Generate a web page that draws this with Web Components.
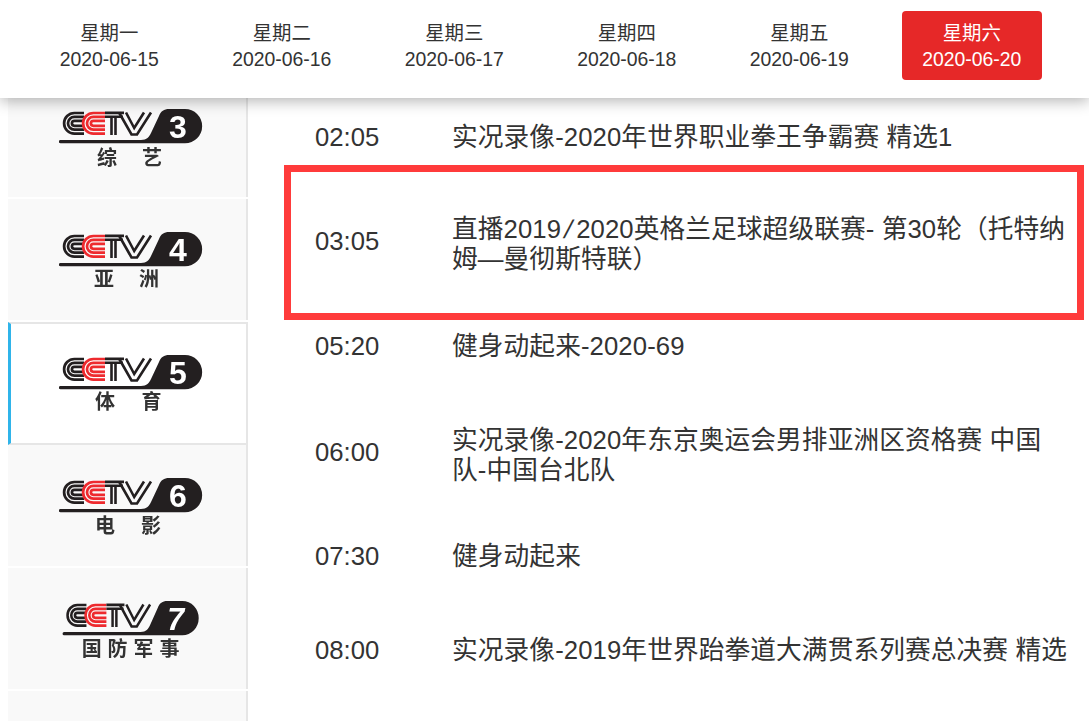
<!DOCTYPE html>
<html lang="zh">
<head>
<meta charset="utf-8">
<title>节目单</title>
<style>
    html, body { margin: 0; height: 100%; background: #fff; }
    body {
        font-family: "Liberation Sans", "Noto Sans CJK SC", sans-serif;
        color: #333;
        overflow: hidden;
    }
    .slash { display: inline-block; width: 15px; text-align: center; transform: skewX(-14deg); }
</style>
</head>
<body>
<tv-guide>
    <day-tabs slot="header">
        <day-tab week="星期一" date="2020-06-15"></day-tab>
        <day-tab week="星期二" date="2020-06-16"></day-tab>
        <day-tab week="星期三" date="2020-06-17"></day-tab>
        <day-tab week="星期四" date="2020-06-18"></day-tab>
        <day-tab week="星期五" date="2020-06-19"></day-tab>
        <day-tab week="星期六" date="2020-06-20" active></day-tab>
    </day-tabs>
    <channel-list slot="side">
        <channel-item num="3" name="综艺" name-x="48 93" name-y="57"></channel-item>
        <channel-item num="4" name="亚洲" name-x="45 90" name-y="55"></channel-item>
        <channel-item num="5" name="体育" name-x="46 92.5" name-y="55" active></channel-item>
        <channel-item num="6" name="电影" name-x="46 92" name-y="56"></channel-item>
        <channel-item num="7" name="国防军事" name-x="32.7 58.5 84.5 110.5" name-y="56" wide></channel-item>
        <channel-item></channel-item>
    </channel-list>
    <program-list slot="main">
        <program-row time="02:05" style="--h: 67px; --top: 11px">实况录像-2020年世界职业拳王争霸赛 精选1</program-row>
        <program-row time="03:05" live style="--h: 155px; --title-top: 3px; --time-bottom: 3px">直播2019<span class="slash">/</span>2020英格兰足球超级联赛- 第30轮（托特纳<span>姆—曼彻斯特联）</span></program-row>
        <program-row time="05:20" style="--h: 52px">健身动起来-2020-69</program-row>
        <program-row time="06:00" style="--h: 160px; --title-top: 6px">实况录像-2020年东京奥运会男排亚洲区资格赛 中国队-中国台北队</program-row>
        <program-row time="07:30" style="--h: 48px">健身动起来</program-row>
        <program-row time="08:00" style="--h: 140px">实况录像-2019年世界跆拳道大满贯系列赛总决赛 精选</program-row>
    </program-list>
</tv-guide>

<script>
class TvGuide extends HTMLElement {
    constructor() {
        super();
        this.attachShadow({ mode: 'open' });
        this.shadowRoot.innerHTML = `
            <style>
                :host { display: flex; flex-direction: column; height: 721px; }
                .top {
                    position: relative;
                    z-index: 2;
                    height: 98px;
                    flex: none;
                    background: #fff;
                    box-shadow: 0 3px 14px rgba(0, 0, 0, 0.3);
                }
                .body { flex: 1; display: flex; min-height: 0; overflow: hidden; padding-left: 8px; }
                .side { width: 240px; flex: none; }
                .main { flex: 1; min-width: 0; }
            </style>
            <div class="top"><slot name="header"></slot></div>
            <div class="body">
                <div class="side"><slot name="side"></slot></div>
                <div class="main"><slot name="main"></slot></div>
            </div>
        `;
    }
}

class DayTabs extends HTMLElement {
    constructor() {
        super();
        this.attachShadow({ mode: 'open' });
        this.shadowRoot.innerHTML = `
            <style>
                :host {
                    display: grid;
                    grid-template-columns: repeat(6, 1fr);
                    padding: 11px 31px 0 23px;
                }
            </style>
            <slot></slot>
        `;
    }
}

class DayTab extends HTMLElement {
    constructor() {
        super();
        this.attachShadow({ mode: 'open' });
        this.shadowRoot.innerHTML = `
            <style>
                :host { display: block; width: 140px; justify-self: center; }
                .tab {
                    height: 69px;
                    border-radius: 4px;
                    display: flex;
                    flex-direction: column;
                    justify-content: center;
                    align-items: center;
                    font-size: 19.4px;
                    line-height: 26px;
                    color: #333;
                }
                :host([active]) .tab { background: #e62828; color: #fff; }
            </style>
            <div class="tab">
                <span>${this.getAttribute('week')}</span>
                <span>${this.getAttribute('date')}</span>
            </div>
        `;
    }
}

class ChannelList extends HTMLElement {
    constructor() {
        super();
        this.attachShadow({ mode: 'open' });
        this.shadowRoot.innerHTML = `
            <style>
                :host { display: flex; flex-direction: column; gap: 2px; margin-top: -22px; }
            </style>
            <slot></slot>
        `;
    }
}

class ChannelItem extends HTMLElement {
    constructor() {
        super();
        const num = this.getAttribute('num');
        const name = this.getAttribute('name') || '';
        const wide = this.hasAttribute('wide');
        this.attachShadow({ mode: 'open' });
        const logo = num ? `
            <svg viewBox="0 0 144 62" width="144" height="62" aria-hidden="true">
                <g transform="${wide ? 'translate(3.7 0) scale(.95 1)' : ''}">
                    <g fill="none" stroke="#231f20" stroke-width="2.7">
                        <path d="M25 5H15.4a10.3 10.3 0 0 0 0 20.6H25"/>
                        <path d="M25 8.9H15.4a6.4 6.4 0 0 0 0 12.8H25"/>
                        <path d="M25 12.8H15.4a2.5 2.5 0 0 0 0 5H25"/>
                    </g>
                    <g fill="none" stroke="#ee2a2e" stroke-width="2.7">
                        <path d="M46 5H34.4a10.3 10.3 0 0 0 0 20.6H46"/>
                        <path d="M46 8.9H34.4a6.4 6.4 0 0 0 0 12.8H46"/>
                        <path d="M46 12.8H34.4a2.5 2.5 0 0 0 0 5H46"/>
                    </g>
                    <g fill="none" stroke="#231f20" stroke-width="2.6">
                        <path d="M46 4.9H65M46 8.7H64"/>
                        <path d="M52.5 9V27M56.5 9V27"/>
                        <path d="M60 4.5L72.5 26.5H78L92 4.5"/>
                        <path d="M67 4.5L75.2 20L85 4.5"/>
                    </g>
                    <path d="M1.5 32H82C88 32 90 29 92 25L100 8C102 3 105 1 110 1H126A17.15 17.15 0 0 1 126 35.3H1.5A1.65 1.65 0 0 1 1.5 32Z" fill="#231f20"/>
                    <text x="119" y="30" text-anchor="middle" font-family="'Liberation Sans', sans-serif" font-weight="700" font-style="${wide ? 'italic' : 'normal'}" font-size="32" fill="#fff">${num}</text>
                </g>
                <text x="${this.getAttribute('name-x')}" y="${this.getAttribute('name-y')}" text-anchor="middle" font-family="'Noto Sans CJK SC', sans-serif" font-weight="700" font-size="20" fill="#333">${name}</text>
            </svg>` : '';
        this.shadowRoot.innerHTML = `
            <style>
                :host {
                    display: block;
                    box-sizing: border-box;
                    height: 121px;
                    background: #f9f9f9;
                    border-right: 2px solid #e6e6e6;
                }
                :host([active]) {
                    background: #fff;
                    border-left: 3px solid #2fb4ea;
                    border-top: 2px solid #e6e6e6;
                    border-bottom: 2px solid #e6e6e6;
                    height: 123px;
                    margin-bottom: -2px;
                }
                svg { display: block; margin: 32px 0 0 51px; filter: blur(0.35px); }
                :host([active]) svg { margin: 30px 0 0 48px; }
            </style>
            ${logo}
        `;
    }
}

class ProgramList extends HTMLElement {
    constructor() {
        super();
        this.attachShadow({ mode: 'open' });
        this.shadowRoot.innerHTML = `
            <style>
                :host { display: block; padding: 0 5px 0 36px; }
            </style>
            <slot></slot>
        `;
    }
}

class ProgramRow extends HTMLElement {
    constructor() {
        super();
        this.attachShadow({ mode: 'open' });
        this.shadowRoot.innerHTML = `
            <style>
                :host {
                    display: grid;
                    grid-template-columns: 137px 1fr;
                    align-items: center;
                    box-sizing: border-box;
                    height: var(--h);
                    padding: var(--top, 0) 14px 0 31px;
                    font-size: 25.7px;
                    line-height: 30px;
                    color: #333;
                }
                :host([live]) {
                    border: 7px solid #ff3b3b;
                    padding-left: 24px;
                    padding-right: 7px;
                }
                .time { padding-bottom: var(--time-bottom, 0); }
                .title { padding-top: var(--title-top, 0); letter-spacing: 0.1px; }
            </style>
            <span class="time">${this.getAttribute('time')}</span>
            <span class="title"><slot></slot></span>
        `;
    }
}

customElements.define('tv-guide', TvGuide);
customElements.define('day-tabs', DayTabs);
customElements.define('day-tab', DayTab);
customElements.define('channel-list', ChannelList);
customElements.define('channel-item', ChannelItem);
customElements.define('program-list', ProgramList);
customElements.define('program-row', ProgramRow);
</script>
</body>
</html>
